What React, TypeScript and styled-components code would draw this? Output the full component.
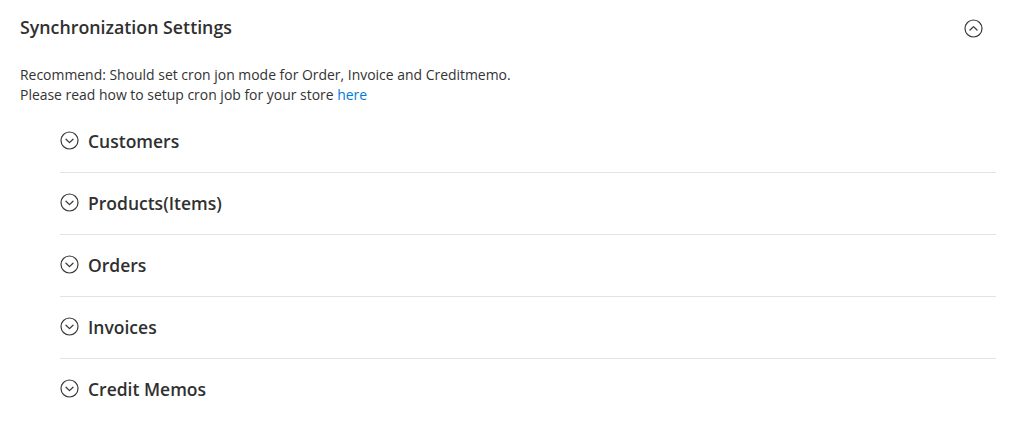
import React from "react";
import styled, { createGlobalStyle } from "styled-components";

const GlobalStyle = createGlobalStyle`
  html, body { margin: 0; padding: 0; background: #ffffff; }
  body { font-family: "Open Sans", "Liberation Sans", sans-serif; color: #303030; }
`;

const Page = styled.div`
  padding: 0 28px 0 20px;
  height: 428px;
  box-sizing: border-box;
`;

const Header = styled.div`
  display: flex;
  align-items: center;
  justify-content: space-between;
  height: 54px;
  padding-right: 13px;
`;

const Title = styled.h2`
  margin: 0;
  font-size: 17.8px;
  font-weight: 600;
  color: #303030;
  line-height: 22px;
`;

const IconButton = styled.button`
  border: 0;
  background: transparent;
  padding: 0;
  margin-top: 2px;
  display: flex;
  cursor: pointer;
  color: #303030;
`;

const Note = styled.div`
  margin-top: 11px;
  font-size: 13.95px;
  line-height: 20px;
  color: #333333;
`;

const Link = styled.a`
  color: #007bdb;
  text-decoration: none;
`;

const List = styled.div`
  margin: 6px 0 0 40px;
`;

const Row = styled.div<{ $last?: boolean }>`
  display: flex;
  align-items: center;
  gap: 9px;
  height: 61px;
  padding-bottom: 2px;
  box-sizing: border-box;
  height: 62px;
  border-bottom: 1px solid ${(p) => (p.$last ? "transparent" : "#e3e3e3")};
`;

const RowTitle = styled.span`
  font-size: 17.5px;
  font-weight: 600;
  color: #303030;
  line-height: 22px;
`;

const Chevron = ({ up }: { up?: boolean }) => (
  <svg width="19" height="19" viewBox="0 0 19 19" fill="none">
    <circle cx="9.5" cy="9.5" r="8.5" stroke="#3a3a3a" strokeWidth="1.2" />
    {up ? (
      <path d="M6 11 L9.5 7.6 L13 11" stroke="#3a3a3a" strokeWidth="1.3" strokeLinecap="round" strokeLinejoin="round" />
    ) : (
      <path d="M6 8.2 L9.5 11.6 L13 8.2" stroke="#3a3a3a" strokeWidth="1.3" strokeLinecap="round" strokeLinejoin="round" />
    )}
  </svg>
);

const sections = ["Customers", "Products(Items)", "Orders", "Invoices", "Credit Memos"];

export default function App() {
  return (
    <>
      <GlobalStyle />
      <Page>
        <Header>
          <Title>Synchronization Settings</Title>
          <IconButton aria-label="Collapse">
            <Chevron up />
          </IconButton>
        </Header>
        <Note>
          Recommend: Should set cron jon mode for Order, Invoice and Creditmemo.
          <br />
          Please read how to setup cron job for your store <Link href="#">here</Link>
        </Note>
        <List>
          {sections.map((s, i) => (
            <Row key={s} $last={i === sections.length - 1}>
              <Chevron />
              <RowTitle>{s}</RowTitle>
            </Row>
          ))}
        </List>
      </Page>
    </>
  );
}
